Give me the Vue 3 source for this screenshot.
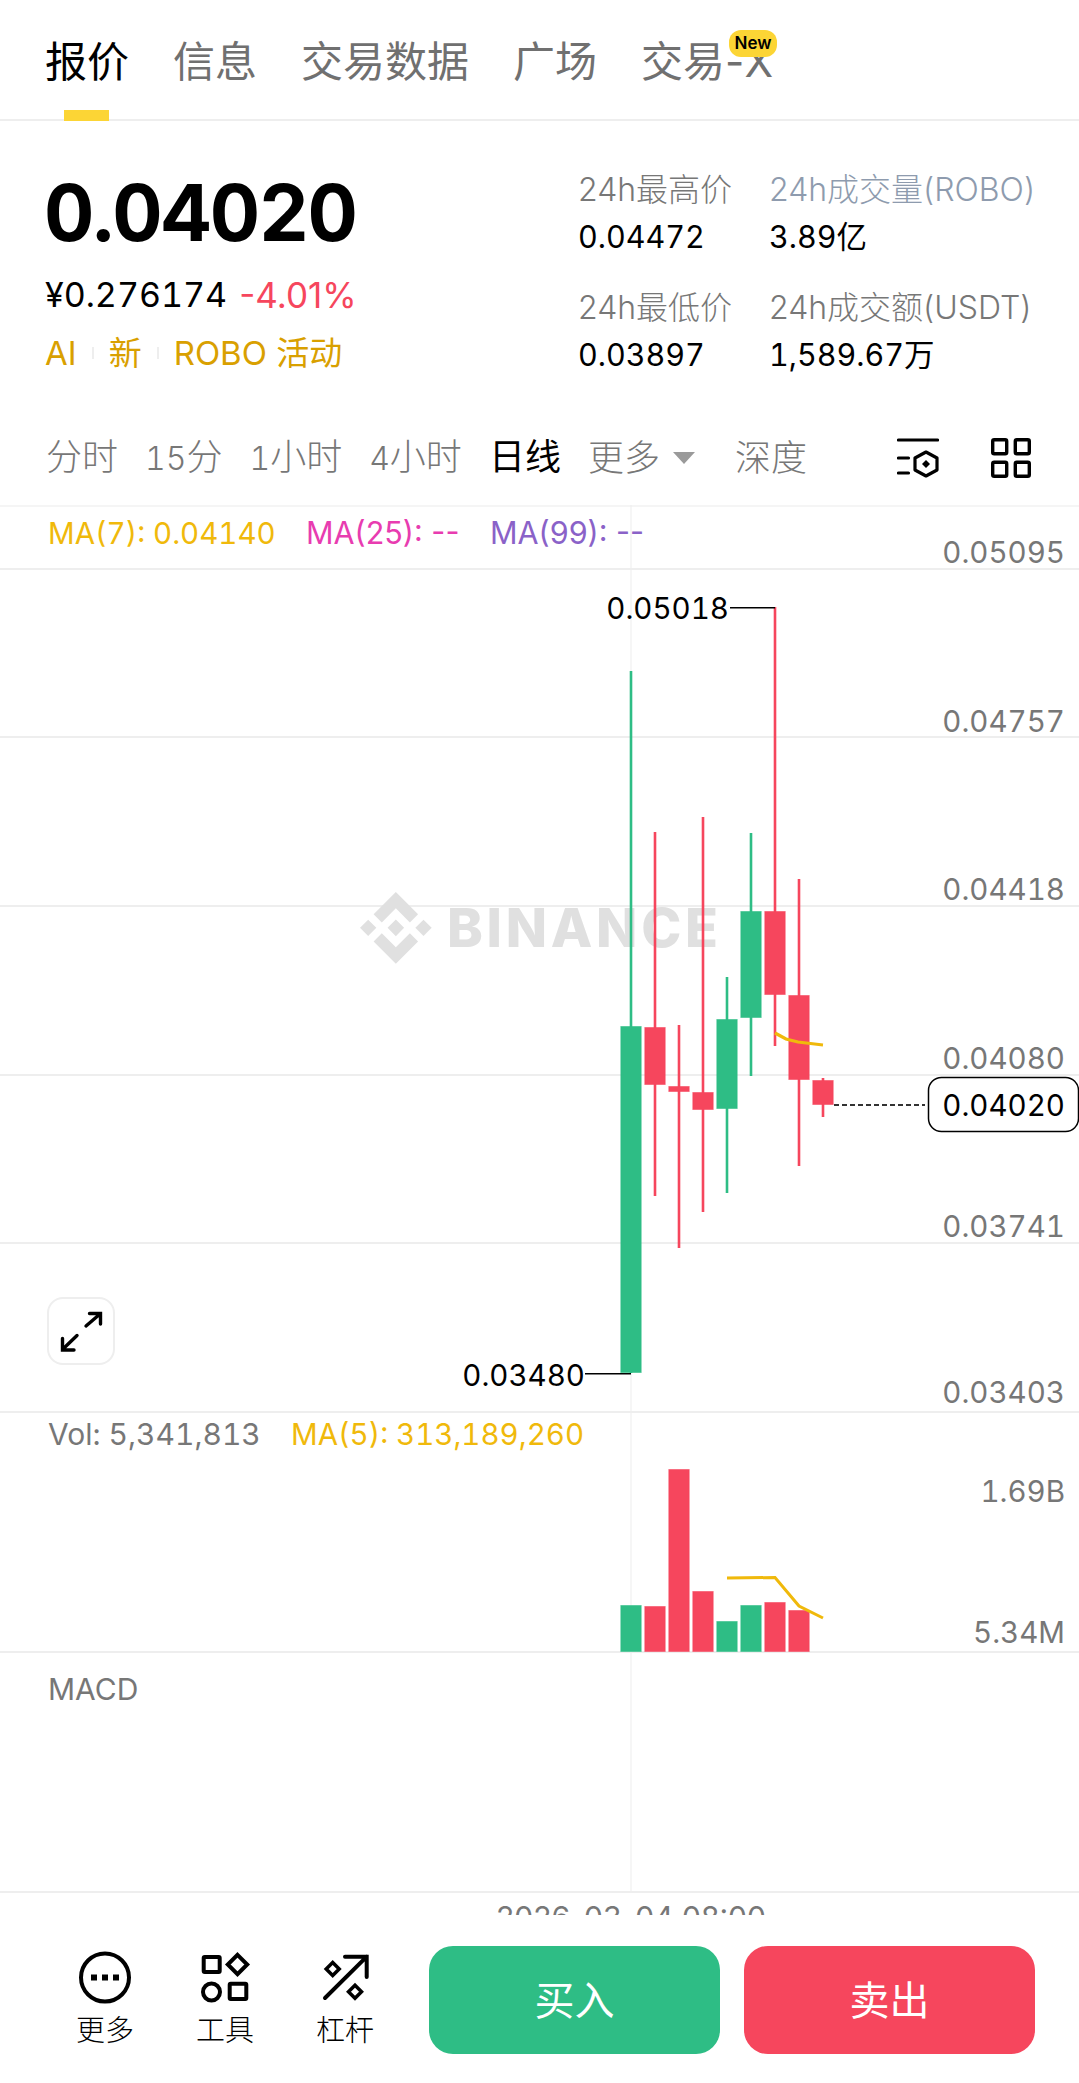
<script setup>
const tabs = ['报价', '信息', '交易数据', '广场', '交易-X']
const intervals = [
  { d: '', t: '分时' }, { d: '15', t: '分' }, { d: '1', t: '小时' }, { d: '4', t: '小时' }, { d: '', t: '日线', active: true }
]
const gridY = [569, 737, 906, 1075, 1243, 1412, 1652, 1892]
const priceLabels = [
  ['0.05095', 563], ['0.04757', 732], ['0.04418', 900],
  ['0.04080', 1069], ['0.03741', 1237], ['0.03403', 1403]
]
const green = '#2EBD85'
const red = '#F6465D'
const candles = [
  { x: 631, c: green, top: 671, bottom: 1373, o: 1026, e: 1373 },
  { x: 655, c: red, top: 832, bottom: 1196, o: 1027, e: 1085 },
  { x: 679, c: red, top: 1025, bottom: 1248, o: 1086, e: 1092 },
  { x: 703, c: red, top: 817, bottom: 1212, o: 1092, e: 1110 },
  { x: 727, c: green, top: 977, bottom: 1193, o: 1019, e: 1109 },
  { x: 751, c: green, top: 833, bottom: 1076, o: 911, e: 1018 },
  { x: 775, c: red, top: 607, bottom: 1046, o: 911, e: 995 },
  { x: 799, c: red, top: 879, bottom: 1166, o: 995, e: 1080 },
  { x: 823, c: red, top: 1078, bottom: 1117, o: 1080, e: 1105 }
]
const volumes = [
  { x: 631, c: green, y: 1605 },
  { x: 655, c: red, y: 1606 },
  { x: 679, c: red, y: 1469 },
  { x: 703, c: red, y: 1591 },
  { x: 727, c: green, y: 1621 },
  { x: 751, c: green, y: 1605 },
  { x: 775, c: red, y: 1602 },
  { x: 799, c: red, y: 1610 }
]
</script>

<template>
  <div class="page">
    <header class="tabs">
      <div v-for="(t, i) in tabs" :key="t" class="tab" :class="{ on: i === 0 }">
        {{ t }}
        <span v-if="i === 4" class="badge">New</span>
      </div>
    </header>

    <section class="stats">
      <div class="main">
        <div class="price">0.04020</div>
        <div class="sub"><span class="cny">¥0.276174</span><span class="down">-4.01%</span></div>
        <div class="tags">
          <span>AI</span><i></i><span>新</span><i></i><span>ROBO 活动</span>
        </div>
      </div>
      <div class="cols">
        <div class="col first">
          <div class="lab">24h最高价</div>
          <div class="val">0.04472</div>
          <div class="lab second">24h最低价</div>
          <div class="val">0.03897</div>
        </div>
        <div class="col">
          <div class="lab blue">24h成交量(ROBO)</div>
          <div class="val">3.89亿</div>
          <div class="lab second">24h成交额(USDT)</div>
          <div class="val">1,589.67万</div>
        </div>
      </div>
    </section>

    <nav class="intervals">
      <span v-for="it in intervals" :key="it.t + it.d" class="iv" :class="{ active: it.active }"><span class="dg">{{ it.d }}</span>{{ it.t }}</span>
      <span class="iv more">更多<b class="tri"></b></span>
      <span class="iv depth">深度</span>
      <svg class="ico ico-a" width="42" height="42" viewBox="0 0 42 42" fill="none" stroke="#000" stroke-width="3.2" stroke-linecap="round" stroke-linejoin="round">
        <path d="M1.500 2h39M1.500 20h10M1.500 35h10"/>
        <path d="M29 14l11 6v12l-11 6-11-6V20z"/>
        <path d="M29 22l4 4-4 4-4-4z" fill="#000" stroke="none"/>
      </svg>
      <svg class="ico ico-b" width="40" height="40" viewBox="0 0 40 40" fill="none" stroke="#000" stroke-width="3.400" stroke-linejoin="round">
        <rect x="1.700" y="1.700" width="14" height="14" rx="1.500"/>
        <rect x="24.300" y="1.700" width="14" height="14" rx="1.500"/>
        <rect x="1.700" y="24.300" width="14" height="14" rx="1.500"/>
        <rect x="24.300" y="24.300" width="14" height="14" rx="1.500"/>
      </svg>
    </nav>

    <section class="chart">
      <svg class="plot" width="1079" height="1410" viewBox="0 505 1079 1410">
        <rect x="0" y="504" width="1079" height="3" fill="#F5F5F5"/>
        <rect v-for="y in gridY" :key="y" x="0" :y="y - 1" width="1079" height="2" fill="#EEEEEE"/>
        <rect x="630.500" y="505" width="1" height="1387" fill="#EEEEEE"/>

        <g fill="#E0E0E0" transform="translate(360 892) scale(.571)">
          <path d="M38.171 53.203L62.759 28.616l24.6 24.6 14.307-14.307L62.759 0 23.864 38.896z"/>
          <path d="M0 62.759l14.307-14.307 14.307 14.307-14.307 14.307z"/>
          <path d="M38.171 72.314L62.759 96.901l24.6-24.6 14.315 14.293-.007.008L62.759 125.518 23.864 86.622l-.02-.02z"/>
          <path d="M96.903 62.759l14.307-14.307 14.307 14.307-14.307 14.307z"/>
          <path d="M77.271 62.751h.006L62.759 48.233 48.256 62.736l-.02.02.02.021 14.503 14.503 14.518-14.518.007-.008z"/>
        </g>
        <text class="wm" x="447" y="947" textLength="271" lengthAdjust="spacing">BINANCE</text>

        <text class="ma" x="48" y="544" fill="#F0B90B">MA(7): 0.04140</text>
        <text class="ma plain" x="306" y="544" fill="#E83CB0">MA(25): --</text>
        <text class="ma plain" x="490" y="544" fill="#8A62C8">MA(99): --</text>

        <text v-for="p in priceLabels" :key="p[0]" class="axis" x="1065" :y="p[1]" text-anchor="end">{{ p[0] }}</text>

        <g v-for="k in candles" :key="k.x">
          <rect :x="k.x - 1.300" :y="k.top" width="2.600" :height="k.bottom - k.top" :fill="k.c"/>
          <rect class="body" :x="k.x - 10.200" :y="k.o + .5" width="20.400" :height="k.e - k.o - 1" :fill="k.c" :stroke="k.c"/>
        </g>
        <polyline points="775,1033 786,1039 798,1042 823,1045" fill="none" stroke="#F0B90B" stroke-width="3.200"/>

        <rect x="730" y="607" width="45" height="1.500" fill="#000"/>
        <text class="note" x="729" y="619" text-anchor="end">0.05018</text>
        <rect x="585" y="1373" width="46" height="1.500" fill="#000"/>
        <text class="note" x="585" y="1386" text-anchor="end">0.03480</text>

        <line x1="834" y1="1105" x2="925" y2="1105" stroke="#333" stroke-width="2" stroke-dasharray="5 3"/>
        <rect x="928.500" y="1077.500" width="150" height="54" rx="13" fill="#fff" stroke="#000" stroke-width="1.500"/>
        <text class="note" x="1065" y="1116" text-anchor="end">0.04020</text>

        <text class="axis vol" x="48" y="1445">Vol: 5,341,813</text>
        <text class="ma" x="291" y="1445" fill="#F0B90B">MA(5): 313,189,260</text>
        <text class="axis" x="1065" y="1502" text-anchor="end">1.69B</text>
        <text class="axis" x="1065" y="1643" text-anchor="end">5.34M</text>
        <rect v-for="v in volumes" :key="v.x" class="body" :x="v.x - 10.200" :y="v.y + .5" width="20.400" :height="1652 - v.y - 1" :fill="v.c" :stroke="v.c"/>
        <polyline points="727,1578 775,1577.500 799,1606 823,1618" fill="none" stroke="#F0B90B" stroke-width="3"/>

        <text class="axis plain lg" x="48" y="1700">MACD</text>
        <text class="axis plain lg" x="631" y="1928" text-anchor="middle">2026-03-04 08:00</text>
      </svg>
      <div class="expand">
        <svg width="44" height="44" viewBox="0 0 44 44" fill="none" stroke="#000" stroke-width="3.400" stroke-linecap="round" stroke-linejoin="miter">
          <path d="M27 17L41 5M30.500 4.500H41.500V15M18 26.500L4 40M3.500 29.500V41H15"/>
        </svg>
      </div>
    </section>

    <footer class="bar">
      <div class="act">
        <svg width="54" height="54" viewBox="0 0 54 54" fill="none" stroke="#000" stroke-width="4">
          <circle cx="27" cy="26.500" r="24"/>
          <path d="M13 23.500h6v6h-6zM24 23.500h6v6h-6zM35 23.500h6v6h-6z" fill="#000" stroke="none"/>
        </svg>
        <span>更多</span>
      </div>
      <div class="act">
        <svg width="54" height="54" viewBox="0 0 54 54" fill="none" stroke="#000" stroke-width="4" stroke-linejoin="round">
          <rect x="5.700" y="6" width="16" height="15" rx="1"/>
          <path d="M39.500 3.800l9.700 9.700-9.700 9.700-9.700-9.700z" stroke-linejoin="miter"/>
          <circle cx="13.500" cy="41" r="8.500"/>
          <rect x="31.700" y="32.700" width="16.600" height="15.300" rx="1"/>
        </svg>
        <span>工具</span>
      </div>
      <div class="act">
        <svg width="54" height="54" viewBox="0 0 54 54" fill="none" stroke="#000" stroke-width="4" stroke-linecap="round" stroke-linejoin="miter">
          <path d="M7 47L48.700 5.700M27 5.700h21.700V26"/>
          <path d="M14.700 11.500l6.500 6.500-6.500 6.500L8.200 18z" stroke-width="3.500"/>
          <path d="M37 34.200l6.500 6.500-6.500 6.500-6.500-6.500z" stroke-width="3.500"/>
        </svg>
        <span>杠杆</span>
      </div>
      <button class="btn buy">买入</button>
      <button class="btn sell">卖出</button>
    </footer>
  </div>
</template>

<style>
html, body { margin: 0; background: #fff; }
</style>

<style scoped>
.page {
  width: 1079px;
  height: 2083px;
  overflow: hidden;
  background: #fff;
  color: #000;
  font-family: Inter, "Noto Sans CJK SC", sans-serif;
}
.tabs {
  height: 119px;
  border-bottom: 2px solid #EEEEEE;
  display: flex;
  gap: 44px;
  padding-left: 45px;
}
.tab {
  position: relative;
  font-size: 42px;
  line-height: 42px;
  padding-top: 41px;
  height: 78px;
  color: #707070;
  font-weight: 400;
}
.tab.on { color: #000; }
.tab.on::after {
  content: "";
  position: absolute;
  left: 19px;
  bottom: -2px;
  width: 45px;
  height: 11px;
  background: #FCD535;
}
.badge {
  position: absolute;
  left: 88px;
  top: 30px;
  width: 48px;
  height: 27px;
  border-radius: 12px;
  background: #FCD535;
  color: #000;
  font-size: 17px;
  line-height: 27px;
  font-weight: 600;
  text-align: center;
}
.stats {
  height: 299px;
  display: flex;
  justify-content: space-between;
  padding-left: 45px;
}
.price {
  margin: 42px 0 0 -1px;
  font-size: 78px;
  line-height: 100px;
  font-weight: 700;
  letter-spacing: -1.600px;
  font-variant-numeric: tabular-nums;
}
.sub {
  margin-top: 12px;
  line-height: 40px;
  display: flex;
  gap: 12px;
}
.cny { font-size: 34px; font-variant-numeric: tabular-nums; }
.down { color: #F6465D; font-size: 35px; }
.tags {
  margin-top: 18px;
  font-size: 33px;
  line-height: 40px;
  color: #D9A000;
  display: flex;
  align-items: center;
  gap: 15px;
}
.tags i {
  display: block;
  width: 2px;
  height: 12px;
  background: #EEEEEE;
}
.cols {
  display: flex;
  width: 501px;
}
.col { width: 191px; }
.col:last-child { width: 310px; }
.lab {
  margin-top: 48px;
  font-size: 32px;
  line-height: 42px;
  color: #777777;
  font-weight: 300;
}
.lab.second { margin-top: 29px; }
.lab.blue { color: #8E9BAE; }
.val {
  font-size: 30.500px;
  line-height: 42px;
  margin-top: 5px;
  font-variant-numeric: tabular-nums;
}
.intervals {
  height: 85px;
  padding: 0 48px 10px 46px;
  box-sizing: border-box;
  display: flex;
  align-items: center;
}
.iv {
  font-size: 36px;
  line-height: 40px;
  color: #777777;
  font-weight: 300;
  margin-right: 27px;
  white-space: nowrap;
}
.dg { font-size: 32px; font-variant-numeric: tabular-nums; }
.iv.active { color: #000; font-weight: 400; }
.more { display: flex; align-items: center; gap: 13px; margin-right: 40px; }
.tri {
  display: block;
  width: 0;
  height: 0;
  border-left: 11px solid transparent;
  border-right: 11px solid transparent;
  border-top: 12px solid #9A9A9A;
}
.depth { margin-right: 0; }
.ico { flex: none; }
.ico-a { margin-left: auto; margin-top: 3px; }
.ico-b { margin-left: 52px; }
.chart {
  position: relative;
  height: 1410px;
  overflow: hidden;
}
.plot { display: block; }
.plot text {
  font-family: Inter, "Noto Sans CJK SC", sans-serif;
  font-variant-numeric: tabular-nums;
}
.body { stroke-opacity: .55; stroke-width: 1; }
.plot text.wm { font-size: 54px; font-weight: 800; fill: #E0E0E0; }
.ma { font-size: 29.500px; }
.ma.plain { font-size: 30.500px; }
.axis { font-size: 29.500px; fill: #777777; }
.axis.vol { font-size: 30px; }
.axis.lg { font-size: 30px; }
.plot text.plain { font-variant-numeric: normal; }
.note { font-size: 29.500px; fill: #000; }
.expand {
  position: absolute;
  left: 47px;
  top: 792px;
  width: 68px;
  height: 68px;
  box-sizing: border-box;
  border: 2.500px solid #EEEEEE;
  border-radius: 16px;
  background: #fff;
  display: flex;
  align-items: center;
  justify-content: center;
}
.bar {
  height: 168px;
  background: #fff;
  display: flex;
  align-items: flex-start;
  padding-left: 45px;
}
.act {
  width: 120px;
  margin-top: 36px;
  display: flex;
  flex-direction: column;
  align-items: center;
  font-size: 29px;
  line-height: 36px;
  font-weight: 300;
}
.act span { margin-top: 8px; }
.btn {
  width: 291px;
  height: 108px;
  margin-top: 31px;
  border: 0;
  border-radius: 24px;
  color: #fff;
  font-size: 40px;
  font-weight: 400;
  font-family: Inter, "Noto Sans CJK SC", sans-serif;
  padding: 0 0 4px;
}
.buy { background: #2EBD85; margin-left: 24px; }
.sell { background: #F6465D; margin-left: 24px; }
</style>
